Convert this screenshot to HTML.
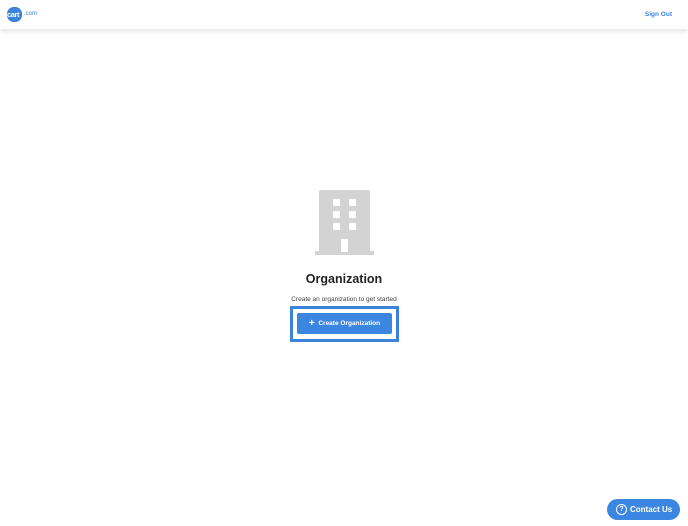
<!DOCTYPE html>
<html><head><style>
body{margin:0;width:688px;height:526px;background:#fff;font-family:"Liberation Sans",sans-serif;position:relative;overflow:hidden}
.hdr{position:absolute;left:0;top:0;width:688px;height:29px;background:#fff;box-shadow:0 2px 5px rgba(0,0,0,.12)}
.logo{position:absolute;left:7px;top:7px;width:15px;height:15px;background:#3b82dd;border-radius:45%}
.logo span{position:absolute;left:0px;top:3px;color:#fff;font-size:7.5px;font-weight:bold;letter-spacing:-.4px}
.com{position:absolute;left:24px;top:11px;color:#3b82dd;font-size:6px}
.so{position:absolute;right:16px;top:11px;color:#3b82dd;font-size:6.5px;font-weight:bold}
.title{position:absolute;left:0;width:688px;top:272px;text-align:center;font-size:12.5px;font-weight:bold;color:#222}
.sub{position:absolute;left:0;width:688px;top:296px;text-align:center;font-size:6.5px;color:#444}
.box{position:absolute;left:290px;top:306px;width:103px;height:30px;border:3px solid #3b82dd}
.btn{position:absolute;left:297px;top:313px;width:95px;height:21px;background:#3b86e0;border-radius:2px;color:#fff;font-size:6.5px;font-weight:bold;text-align:center;line-height:21px}
.cu{position:absolute;left:607px;top:499px;width:73px;height:21px;background:#3b86e0;border-radius:11px;color:#fff;font-size:8px;font-weight:bold;line-height:21px}
.cu i{position:absolute;left:9px;top:5px;width:9px;height:9px;border:1.2px solid #fff;border-radius:50%;font-style:normal;font-size:7px;line-height:9px;text-align:center}
.cu b{position:absolute;left:23px}
</style></head><body>
<div class="hdr"><div class="logo"><span>cart</span></div><div class="com">.com</div><div class="so">Sign Out</div></div>
<svg style="position:absolute;left:0;top:0" width="688" height="526">
<rect x="319" y="190" width="51" height="63" rx="2" fill="#d3d3d3"/>
<rect x="315" y="251" width="59" height="4" fill="#d3d3d3"/>
<g fill="#fff">
<rect x="333" y="199" width="7" height="7" rx="1"/><rect x="349" y="199" width="7" height="7" rx="1"/>
<rect x="333" y="211" width="7" height="7" rx="1"/><rect x="349" y="211" width="7" height="7" rx="1"/>
<rect x="333" y="223" width="7" height="7" rx="1"/><rect x="349" y="223" width="7" height="7" rx="1"/>
<rect x="341" y="239" width="7" height="13"/></g>
</svg>
<div class="title">Organization</div>
<div class="sub">Create an organization to get started</div>
<div class="box"></div>
<div class="btn"><span style="font-size:10px;vertical-align:-1px">+</span>&nbsp; Create Organization</div>
<div class="cu"><i>?</i><b>Contact Us</b></div>
</body></html>
